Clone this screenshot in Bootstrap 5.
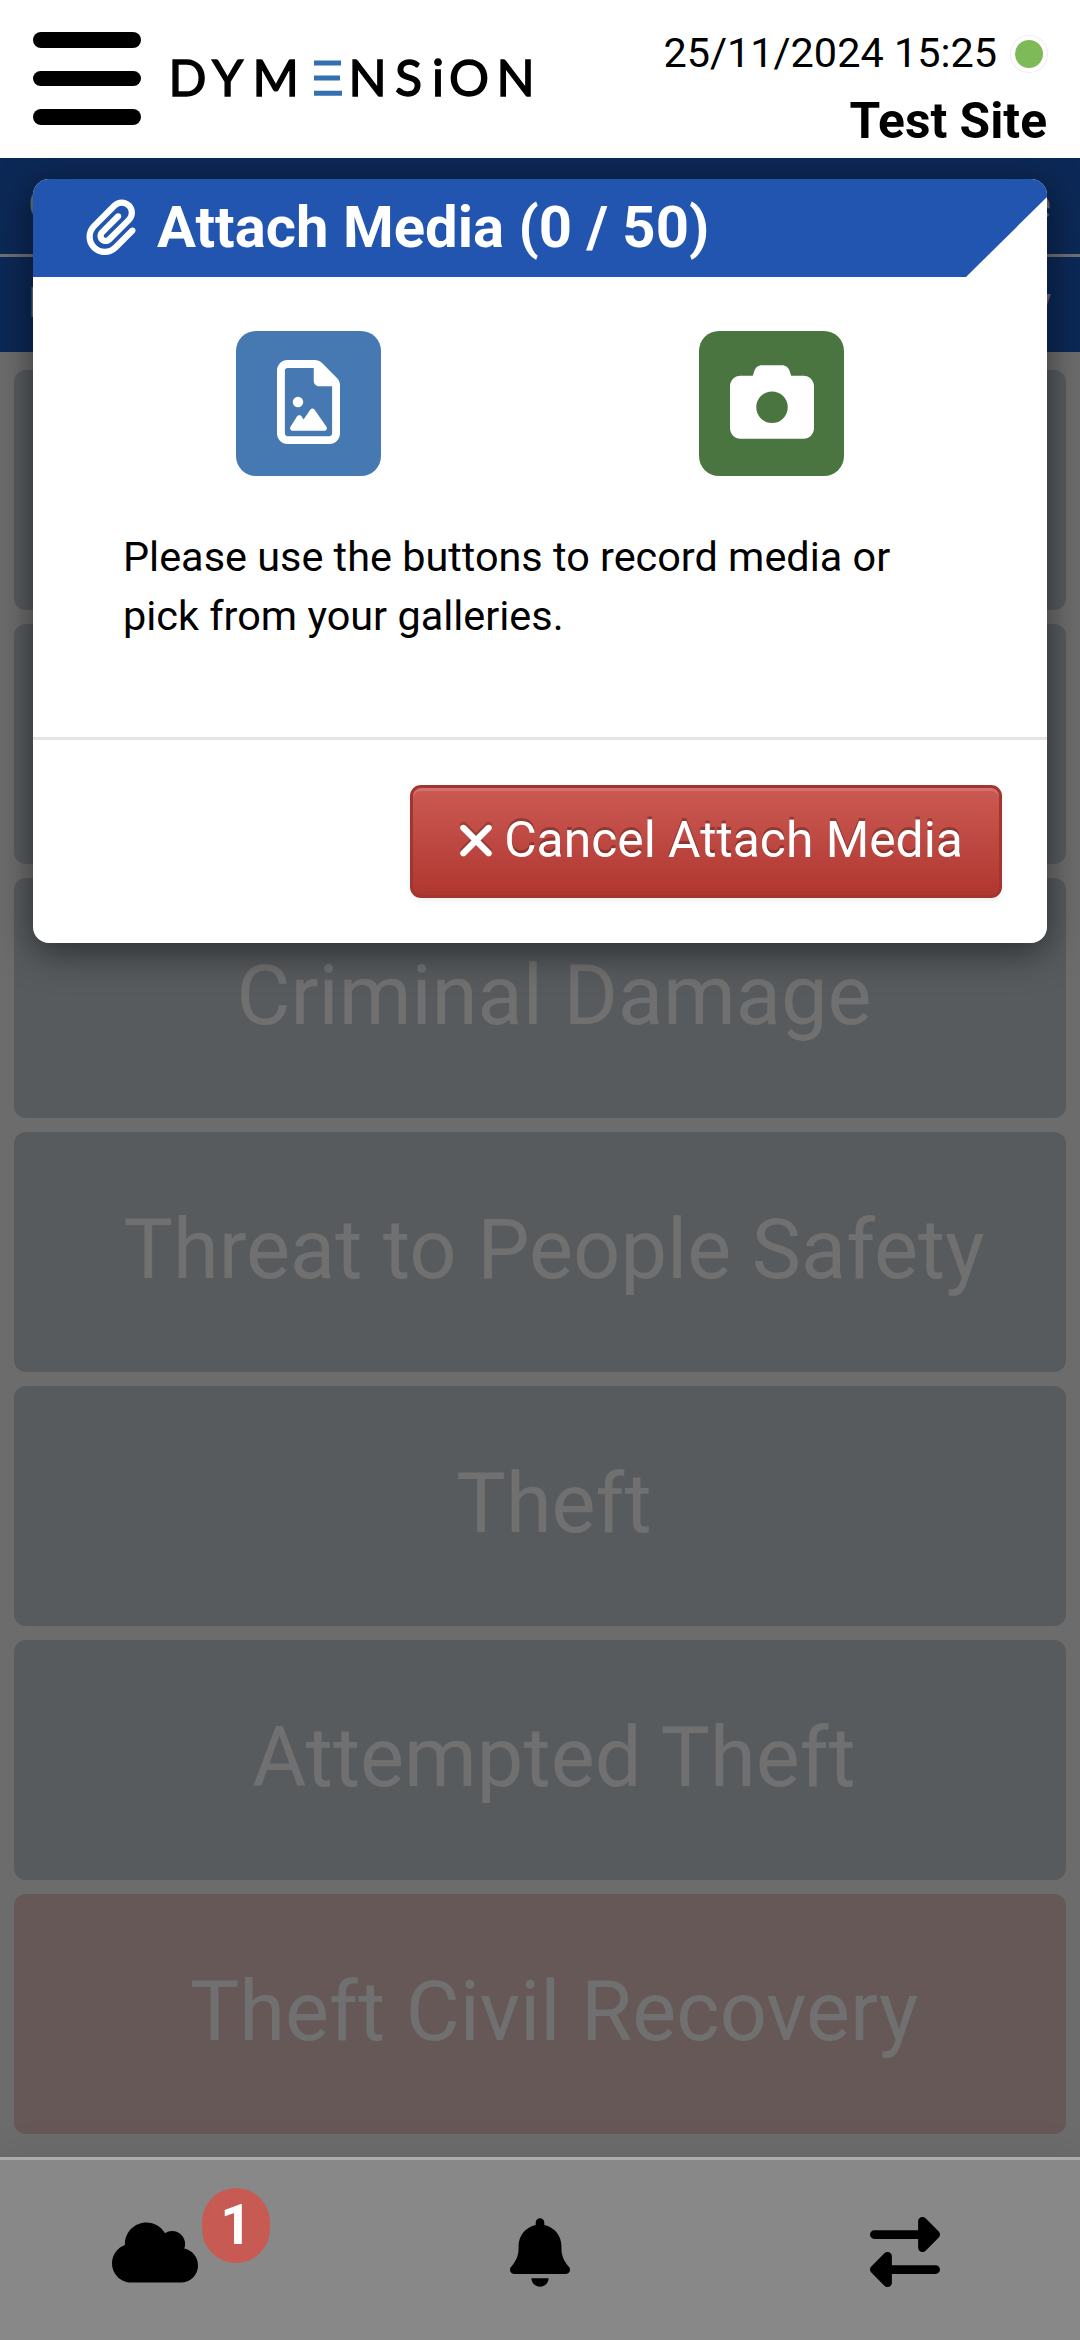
<!DOCTYPE html>
<html lang="en">
<head>
    <meta charset="UTF-8">
    <meta name="viewport" content="width=device-width, initial-scale=1.0">
    <title>Attach Media - Dymension</title>
    <link href="https://cdn.jsdelivr.net/npm/bootstrap@5.3.3/dist/css/bootstrap.min.css" rel="stylesheet">
    <style>
        body {
            font-family: Roboto, "Liberation Sans", sans-serif;
            color: #000;
            background-color: #6c6c6c;
            height: 2340px;
            overflow: hidden;
        }
        svg { flex-shrink: 0; fill: currentColor; }

        /* Top bar */
        .site-header { height: 158px; padding: 0 33px; }
        .menu-toggle { width: 108px; gap: 23px; margin-top: -1px; }
        .menu-toggle span { height: 15.5px; border-radius: 8px; background: #000; }
        .brand-logo { width: 372px; height: 62px; margin-left: 27px; }
        .brand-logo text {
            font-family: Lato, sans-serif;
            font-size: 50px;
            stroke: #000;
            stroke-width: 1.4px;
        }
        .site-status { font-size: 41.4px; line-height: 1; margin-top: 33px; gap: 14px; }
        .status-dot {
            width: 36px; height: 36px;
            border: 4px solid #fff;
            background: #7fba59;
            box-shadow: 0 0 0 1px #eee;
        }
        .site-name { font-size: 49.7px; line-height: 1; margin-top: 23px; }

        /* Dimmed page behind the dialog */
        .filter-row {
            height: 96px;
            padding: 0 29px 4px 28px;
            background: #0c2856;
            color: #6c7075;
            font-size: 42px;
        }
        .filter-row + .filter-row { border-top: 3px solid #6c7075; height: 98px; }
        .tile-list { padding: 18px 14px 0; gap: 14px; height: 1805px; }
        .tile {
            height: 240px;
            border-radius: 12px;
            padding: 0 0 3px 28px;
            background: #575b5e;
            color: #707070;
            font-size: 83px;
        }
        .tile-recovery { background: #655856; }

        /* Dialog */
        .media-dialog {
            top: 179px; left: 33px;
            width: 1014px; height: 764px;
            border-radius: 16px;
            box-shadow: 0 9px 36px rgba(0, 0, 0, .5);
        }
        .media-title {
            height: 98px;
            padding: 0 0 3px 53px;
            gap: 21px;
            background: #2255b0;
            clip-path: polygon(0 0, 100% 0, 100% 18px, 933px 100%, 0 100%);
            font-size: 58px;
            line-height: 1;
        }
        .media-body { height: 460px; padding: 54px 91px 0 90px; font-size: 41.4px; line-height: 59px; }
        .media-buttons { margin: 0 112px 52px 113px; }
        .btn-media { width: 145px; height: 145px; border-radius: 20px; }
        .btn-gallery { background: #4679b2; }
        .btn-camera { background: #4a7541; }
        .media-footer { border-top: 3px solid #e4e4e4; padding: 45px; }
        .btn-cancel {
            width: 592px; height: 113px;
            border: 3px solid #a13530;
            border-radius: 11px;
            padding: 0 0 2px 8px;
            gap: 9px;
            background: linear-gradient(#cb5a53, #b03730);
            box-shadow: inset 0 3px 0 rgba(255, 255, 255, .15), 0 3px 6px rgba(0, 0, 0, .06);
            text-shadow: 0 -3px 0 rgba(0, 0, 0, .25);
            font-size: 49.8px;
        }
        .btn-cancel svg { filter: drop-shadow(0 -3px 0 rgba(0, 0, 0, .2)); }

        /* Bottom bar */
        .bottom-bar {
            height: 183px;
            padding: 4px 42px 0 0;
            border-top: 3px solid #acacac;
            background: #888;
            box-shadow: 0 0 40px rgba(0, 0, 0, .08);
        }
        .bar-sync { width: 309px; }
        .bar-alerts { width: 462px; }
        .sync-count {
            left: 202px; top: 28px;
            width: 68px; height: 75px;
            background: #c75b54;
            font-size: 55px;
        }
    </style>
</head>
<body>
    <header class="site-header bg-white d-flex">
        <div class="menu-toggle d-flex flex-column justify-content-center">
            <span></span><span></span><span></span>
        </div>
        <svg class="brand-logo align-self-center" viewBox="-5 -12 372 62">
            <text x="-4.5 39 79.5" y="36">DYM</text>
            <path d="M141 3h27M141 18h26M141 33.300h28" stroke="#3470b0" stroke-width="5"/>
            <text x="175.500 222 259 276 323.500" y="36">NSiON</text>
        </svg>
        <div class="ms-auto d-flex flex-column align-items-end">
            <div class="site-status d-flex align-items-center">
                <span>25/11/2024 15:25</span>
                <span class="status-dot rounded-circle"></span>
            </div>
            <div class="site-name fw-bold">Test Site</div>
        </div>
    </header>

    <main>
        <div class="filter-row d-flex align-items-center justify-content-between"><span>C</span><span>e</span></div>
        <div class="filter-row d-flex align-items-center justify-content-between"><span>L</span><span>y</span></div>
        <div class="tile-list d-flex flex-column">
            <div class="tile"></div>
            <div class="tile"></div>
            <div class="tile d-flex align-items-center justify-content-center">Criminal Damage</div>
            <div class="tile d-flex align-items-center justify-content-center">Threat to People Safety</div>
            <div class="tile d-flex align-items-center justify-content-center">Theft</div>
            <div class="tile d-flex align-items-center justify-content-center">Attempted Theft</div>
            <div class="tile tile-recovery d-flex align-items-center justify-content-center">Theft Civil Recovery</div>
        </div>
    </main>

    <footer class="bottom-bar position-relative d-flex align-items-center">
        <div class="bar-sync d-flex justify-content-center">
            <svg width="86" height="69" viewBox="0 0 640 512"><path d="M0 336c0 79.500 64.500 144 144 144H512c70.700 0 128-57.300 128-128c0-61.900-44-113.600-102.400-125.400c4.100-10.700 6.400-22.400 6.400-34.600c0-53-43-96-96-96c-19.700 0-38.100 6-53.300 16.200C367 64.200 315.300 32 256 32C167.600 32 96 103.600 96 192c0 2.700 .1 5.400 .2 8.100C40.200 219.800 0 273.200 0 336z"/></svg>
            <span class="sync-count position-absolute rounded-pill text-white fw-bold d-flex align-items-center justify-content-center">1</span>
        </div>
        <div class="bar-alerts d-flex justify-content-center">
            <svg width="60" height="69" viewBox="0 0 448 512"><path d="M224 0c-17.700 0-32 14.300-32 32V51.200C119 66 64 130.600 64 208v18.800c0 47-17.300 92.400-48.500 127.600l-7.400 8.300c-8.400 9.400-10.400 22.900-5.300 34.400S19.400 416 32 416H416c12.600 0 24-7.400 29.200-18.900s3.100-25-5.300-34.400l-7.400-8.300C401.300 319.200 384 273.900 384 226.800V208c0-77.400-55-142-128-156.800V32c0-17.700-14.300-32-32-32zm45.300 493.300c12-12 18.700-28.300 18.700-45.300H224 160c0 17 6.700 33.300 18.700 45.300s28.300 18.700 45.300 18.700s33.300-6.700 45.300-18.700z"/></svg>
        </div>
        <div class="flex-fill d-flex justify-content-center">
            <svg width="70" height="70" viewBox="0 0 512 512"><path d="M32 96l320 0V32c0-12.900 7.800-24.600 19.800-29.600s25.700-2.200 34.900 6.900l96 96c6 6 9.400 14.100 9.400 22.600s-3.400 16.600-9.400 22.600l-96 96c-9.200 9.200-22.900 11.900-34.900 6.900s-19.800-16.600-19.800-29.600V160L32 160c-17.700 0-32-14.300-32-32s14.300-32 32-32zM480 352c17.700 0 32 14.300 32 32s-14.300 32-32 32H160v64c0 12.900-7.800 24.600-19.800 29.600s-25.700 2.200-34.900-6.900l-96-96c-6-6-9.400-14.100-9.400-22.600s3.400-16.600 9.400-22.600l96-96c9.200-9.200 22.900-11.900 34.900-6.900s19.800 16.600 19.800 29.600l0 64H480z"/></svg>
        </div>
    </footer>

    <div class="media-dialog position-absolute bg-white overflow-hidden">
        <div class="media-title d-flex align-items-center text-white fw-bold">
            <svg width="50" height="58" viewBox="0 0 448 512"><path d="M364.200 83.800c-24.400-24.400-64-24.400-88.400 0l-184 184c-42.100 42.100-42.100 110.300 0 152.400s110.300 42.100 152.400 0l152-152c10.900-10.900 28.700-10.900 39.600 0s10.900 28.700 0 39.600l-152 152c-64 64-167.600 64-231.600 0s-64-167.600 0-231.600l184-184c46.300-46.300 121.300-46.300 167.600 0s46.300 121.300 0 167.600l-176 176c-28.600 28.600-75 28.600-103.600 0s-28.600-75 0-103.600l144-144c10.900-10.900 28.700-10.900 39.600 0s10.900 28.700 0 39.600l-144 144c-6.700 6.700-6.700 17.700 0 24.400s17.700 6.700 24.400 0l176-176c24.400-24.400 24.400-64 0-88.400z"/></svg>
            <span>Attach Media (0 / 50)</span>
        </div>
        <div class="media-body">
            <div class="media-buttons d-flex justify-content-between">
                <button class="btn-media btn-gallery border-0 p-0 pb-1 text-white d-flex align-items-center justify-content-center" aria-label="Gallery">
                    <svg width="63" height="84" viewBox="0 0 384 512"><path d="M64 464c-8.800 0-16-7.200-16-16V64c0-8.800 7.200-16 16-16H224v80c0 17.700 14.300 32 32 32h80V448c0 8.800-7.200 16-16 16H64zM64 0C28.700 0 0 28.700 0 64V448c0 35.300 28.700 64 64 64H320c35.300 0 64-28.700 64-64V154.500c0-17-6.700-33.300-18.700-45.300L274.700 18.700C262.700 6.700 246.500 0 229.500 0H64zm96 256a32 32 0 1 0 -64 0 32 32 0 1 0 64 0zm69.200 46.900c-3-4.300-7.900-6.900-13.200-6.900s-10.200 2.600-13.200 6.900l-41.300 59.700-11.900-19.100c-2.900-4.700-8.100-7.500-13.600-7.500s-10.600 2.800-13.600 7.500l-40 64c-3.100 4.900-3.200 11.100-.4 16.200s8.200 8.200 14 8.200h48 32 40 72c6 0 11.400-3.300 14.200-8.600s2.400-11.600-1-16.500l-72-104z"/></svg>
                </button>
                <button class="btn-media btn-camera border-0 p-0 pb-1 text-white d-flex align-items-center justify-content-center" aria-label="Camera">
                    <svg width="84" height="84" viewBox="0 0 512 512"><path d="M149.100 64.800L138.700 96H64C28.700 96 0 124.700 0 160V416c0 35.300 28.700 64 64 64H448c35.300 0 64-28.700 64-64V160c0-35.300-28.700-64-64-64H373.300L362.900 64.800C356.400 45.200 338.100 32 317.400 32H194.600c-20.700 0-39 13.200-45.500 32.800zM256 192a96 96 0 1 1 0 192 96 96 0 1 1 0-192z"/></svg>
                </button>
            </div>
            <p class="mb-0">Please use the buttons to record media or pick from your galleries.</p>
        </div>
        <div class="media-footer d-flex justify-content-end">
            <button class="btn-cancel text-white d-flex align-items-center justify-content-center">
                <svg width="38" height="51" viewBox="0 0 384 512"><path d="M342.600 150.600c12.500-12.500 12.500-32.800 0-45.300s-32.800-12.500-45.300 0L192 210.700 86.600 105.400c-12.500-12.500-32.800-12.500-45.300 0s-12.500 32.800 0 45.300L146.700 256 41.400 361.400c-12.500 12.500-12.500 32.800 0 45.300s32.800 12.500 45.300 0L192 301.300 297.400 406.600c12.500 12.500 32.800 12.500 45.300 0s12.500-32.800 0-45.300L237.300 256 342.600 150.600z"/></svg>
                <span>Cancel Attach Media</span>
            </button>
        </div>
    </div>
    <script src="https://cdn.jsdelivr.net/npm/bootstrap@5.3.3/dist/js/bootstrap.bundle.min.js"></script>
</body>
</html>
